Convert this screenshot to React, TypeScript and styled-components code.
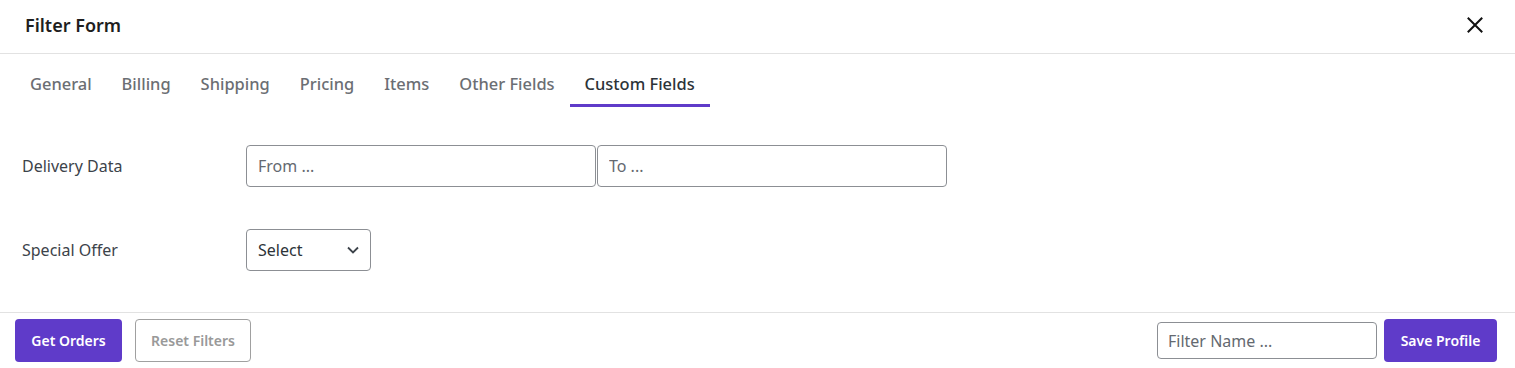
import React, { useState } from 'react';
import styled, { createGlobalStyle } from 'styled-components';

const GlobalStyle = createGlobalStyle`
  html, body {
    margin: 0;
    padding: 0;
    background: #fff;
  }
  body {
    font-family: "Noto Sans", "Open Sans", sans-serif;
    color: #3c434a;
  }
  * {
    box-sizing: border-box;
  }
`;

const PURPLE = '#5f3bc9';

const tabs = [
  'General',
  'Billing',
  'Shipping',
  'Pricing',
  'Items',
  'Other Fields',
  'Custom Fields',
];

export default function App() {
  const [active, setActive] = useState<string>('Custom Fields');

  return (
    <Modal>
      <GlobalStyle />
      <Header>
        <Title>Filter Form</Title>
        <CloseButton aria-label="Close">
          <svg width="16" height="16" viewBox="0 0 16 16">
            <path
              d="M1.5 1.5 L14.5 14.5 M14.5 1.5 L1.5 14.5"
              stroke="#111"
              strokeWidth="2"
              strokeLinecap="square"
            />
          </svg>
        </CloseButton>
      </Header>

      <TabBar>
        {tabs.map(tab => (
          <Tab key={tab} $active={tab === active} onClick={() => setActive(tab)}>
            {tab}
          </Tab>
        ))}
      </TabBar>

      <Body>
        <Row>
          <Label>Delivery Data</Label>
          <RangeGroup>
            <TextInput placeholder="From ..." $width={350} />
            <TextInput placeholder="To ..." $width={350} />
          </RangeGroup>
        </Row>
        <Row>
          <Label>Special Offer</Label>
          <SelectBox>
            <span>Select</span>
            <svg width="14" height="14" viewBox="0 0 14 14">
              <path
                d="M2 4.5 L7 9.5 L12 4.5"
                fill="none"
                stroke="#3c434a"
                strokeWidth="1.8"
              />
            </svg>
          </SelectBox>
        </Row>
      </Body>

      <Footer>
        <ButtonGroup>
          <PrimaryButton $width={107}>Get Orders</PrimaryButton>
          <GhostButton>Reset Filters</GhostButton>
        </ButtonGroup>
        <ButtonGroup $gap={7}>
          <FilterInput placeholder="Filter Name ..." />
          <PrimaryButton $width={113}>Save Profile</PrimaryButton>
        </ButtonGroup>
      </Footer>
    </Modal>
  );
}

const Modal = styled.div`
  display: flex;
  flex-direction: column;
  width: 1515px;
  height: 368px;
  background: #fff;
`;

const Header = styled.header`
  display: flex;
  align-items: center;
  justify-content: space-between;
  height: 54px;
  padding: 0 32px 0 25px;
  border-bottom: 1px solid #e2e2e2;
`;

const Title = styled.h2`
  margin: 0 0 4px;
  font-size: 18px;
  font-weight: 600;
  color: #1e1e1e;
`;

const CloseButton = styled.button`
  display: flex;
  align-items: center;
  justify-content: center;
  padding: 0;
  margin-bottom: 4px;
  border: none;
  background: none;
  cursor: pointer;
`;

const TabBar = styled.nav`
  display: flex;
  padding: 0 15px;
`;

const Tab = styled.button<{ $active?: boolean }>`
  padding: 19px 15px 9px;
  border: none;
  border-bottom: 3px solid ${p => (p.$active ? PURPLE : 'transparent')};
  background: none;
  font-family: inherit;
  font-size: 16.45px;
  line-height: 22px;
  font-weight: 500;
  color: ${p => (p.$active ? '#2c3338' : '#6b6e73')};
  cursor: pointer;
`;

const Body = styled.section`
  display: flex;
  flex-direction: column;
  gap: 42px;
  flex: 1;
  padding: 38px 22px 0;
`;

const Row = styled.div`
  display: flex;
  align-items: center;
`;

const Label = styled.label`
  width: 224px;
  font-size: 16px;
  color: #3c434a;
`;

const RangeGroup = styled.div`
  display: flex;
  gap: 1px;
`;

const TextInput = styled.input<{ $width: number }>`
  width: ${p => p.$width}px;
  height: 42px;
  padding: 0 11px;
  border: 1px solid #8c8f94;
  border-radius: 4px;
  font-family: inherit;
  font-size: 16px;
  color: #2c3338;

  &::placeholder {
    color: #646970;
  }
`;

const SelectBox = styled.div`
  display: flex;
  align-items: center;
  justify-content: space-between;
  width: 125px;
  height: 42px;
  padding: 0 10px 0 11px;
  border: 1px solid #8c8f94;
  border-radius: 4px;
  font-size: 16px;
  color: #2c3338;
`;

const Footer = styled.footer`
  display: flex;
  align-items: center;
  justify-content: space-between;
  padding: 6px 18px 6px 15px;
  border-top: 1px solid #e2e2e2;
`;

const ButtonGroup = styled.div<{ $gap?: number }>`
  display: flex;
  align-items: center;
  gap: ${p => p.$gap ?? 13}px;
`;

const PrimaryButton = styled.button<{ $width: number }>`
  width: ${p => p.$width}px;
  height: 43px;
  border: none;
  border-radius: 4px;
  background: ${PURPLE};
  color: #fff;
  font-family: inherit;
  font-size: 14px;
  font-weight: 600;
  cursor: pointer;
`;

const GhostButton = styled.button`
  width: 116px;
  height: 43px;
  border: 1px solid #a0a0a0;
  border-radius: 4px;
  background: #fff;
  color: #999;
  font-family: inherit;
  font-size: 14px;
  font-weight: 600;
  cursor: pointer;
`;

const FilterInput = styled.input`
  width: 220px;
  height: 37px;
  padding: 0 10px;
  border: 1px solid #8c8f94;
  border-radius: 4px;
  font-family: inherit;
  font-size: 16px;

  &::placeholder {
    color: #646970;
  }
`;
